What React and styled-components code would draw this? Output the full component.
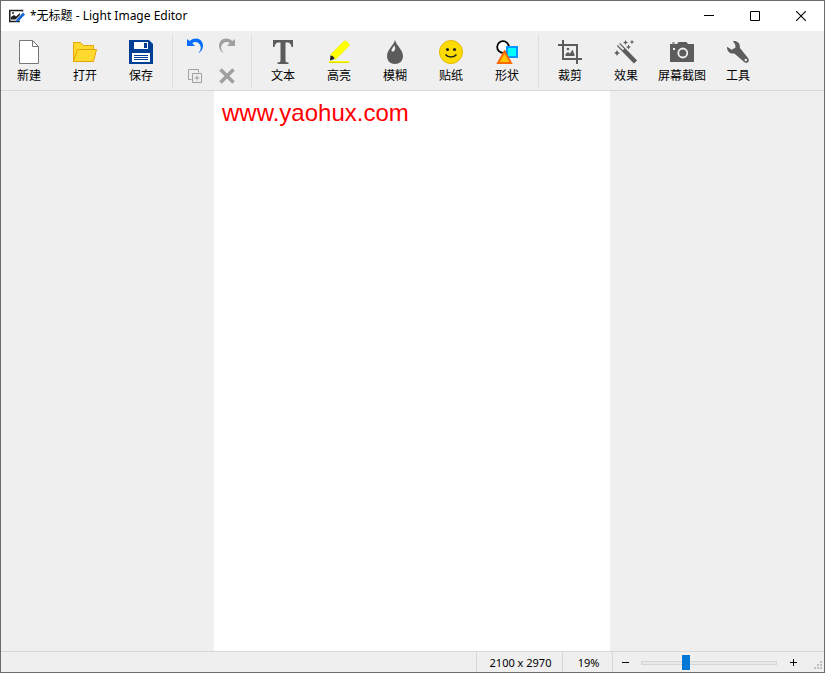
import React, { useState } from 'react';
import styled, { createGlobalStyle } from 'styled-components';

const GlobalStyle = createGlobalStyle`
  * { box-sizing: border-box; }
  body {
    margin: 0;
    font-family: "Noto Sans", "Noto Sans CJK SC", sans-serif;
    font-size: 12px;
    color: #000;
  }
  button {
    margin: 0;
    padding: 0;
    border: 0;
    background: transparent;
    color: inherit;
    font: inherit;
  }
  svg { display: block; flex: none; }
`;

const Window = styled.div`
  display: flex;
  flex-direction: column;
  height: 100vh;
  border: 1px solid #6b6b6b;
  background: #efefef;
`;

const TitleBar = styled.header`
  display: flex;
  align-items: center;
  flex: none;
  height: 30px;
  padding-left: 8px;
  background: #fff;
`;

const Title = styled.h1`
  flex: 1;
  margin: 0 0 0 5px;
  font-size: 12px;
  font-weight: 400;
  line-height: 16px;
`;

const WindowButton = styled.button`
  display: flex;
  align-items: center;
  justify-content: center;
  width: 46px;
  height: 30px;
  &:hover { background: #e5e5e5; }
`;

const Toolbar = styled.nav`
  display: flex;
  flex: none;
  height: 60px;
  border-bottom: 1px solid #d7d7d7;
`;

const ToolButton = styled.button`
  display: flex;
  flex-direction: column;
  align-items: center;
  gap: 4px;
  width: 56px;
  padding-top: 9px;
  line-height: 16px;
  white-space: nowrap;
  &:hover { background: #e3eef8; }
`;

const Separator = styled.div`
  width: 1px;
  margin: 3px 3px 2px;
  background: #dfdfdf;
`;

const SmallTools = styled.div`
  display: grid;
  grid-template-columns: 32px 32px;
  grid-template-rows: 28px 28px;
  row-gap: 2px;
  padding: 1px 5px 0 3px;
`;

const SmallButton = styled.button`
  display: flex;
  align-items: center;
  justify-content: center;
  color: ${(p) => (p.disabled ? '#a0a0a0' : '#0a6cff')};
`;

const Workspace = styled.main`
  display: flex;
  justify-content: center;
  flex: 1;
  min-height: 0;
  padding-right: 1px;
`;

const Page = styled.div`
  height: 100%;
  aspect-ratio: 2100 / 2970;
  padding: 8px;
  background: #fff;
`;

const PageText = styled.p`
  margin: 0;
  color: #f00;
  font-family: "Liberation Sans", Arial, sans-serif;
  font-size: 24px;
  line-height: 28px;
`;

const StatusBar = styled.footer`
  display: flex;
  justify-content: flex-end;
  flex: none;
  height: 21px;
  border-top: 1px solid #d7d7d7;
  font-size: 11px;
  line-height: 21px;
`;

const StatusCell = styled.div`
  width: ${(p) => p.$width};
  border-left: 1px solid #d7d7d7;
  padding-left: 2px;
  text-align: center;
`;

const ZoomBar = styled.div`
  display: flex;
  align-items: center;
  padding-top: 2px;
  border-left: 1px solid #d7d7d7;
`;

const ZoomButton = styled.button`
  display: flex;
  align-items: center;
  justify-content: center;
  width: 24px;
  height: 18px;
`;

const ZoomSlider = styled.input`
  appearance: none;
  width: 136px;
  height: 16px;
  margin: 0 4px;
  background: transparent;
  &::-webkit-slider-runnable-track {
    height: 4px;
    border: 1px solid #d6d6d6;
    background: #e7eaea;
  }
  &::-webkit-slider-thumb {
    appearance: none;
    width: 8px;
    height: 15px;
    margin-top: -7px;
    background: #0078d7;
  }
`;

const Grip = styled.div`
  display: flex;
  align-items: flex-end;
  width: 19px;
  padding: 0 1px 2px 9px;
`;

const Icon = ({ size = 24, children }) => (
  <svg width={size} height={size} viewBox={`0 0 ${size} ${size}`} fill="none" aria-hidden="true">
    {children}
  </svg>
);

const GRAY = '#5c5c5c';

const NewIcon = () => (
  <Icon>
    <path d="M2.5.5h13l6 6v17h-19z" fill="#fff" stroke="#777" />
    <path d="M15.5.5v6h6" stroke="#777" />
  </Icon>
);

const OpenIcon = () => (
  <Icon>
    <path d="M.5 21.500V2.500h7l3 3h10v5" fill="#ffd92e" stroke="#e5a50a" />
    <path d="M4.500 9.500h19l-3 12H.500z" fill="#ffd92e" stroke="#e5a50a" />
  </Icon>
);

const SaveIcon = () => (
  <Icon>
    <path d="M0 0h20l4 4v20H0z" fill="#003f96" />
    <path d="M5 2h14v7H5zM3 13h18v9H3z" fill="#fff" />
    <path d="M15 3h3v5h-3zM5 15h14v1H5zM5 17h14v1H5zM5 19h14v1H5z" fill="#003f96" />
  </Icon>
);

const curvedArrow = 'M0 1l2.500 2C4.500 1.300 7 .5 9 .5c4 0 7 3.200 7 7.300 0 3.500-2 6.200-5 7.200 1.800-1.500 2.800-3.200 2.800-5.200C13.800 6.500 11.300 4 8.300 4c-1.300 0-2.300.400-3 1.200L8 8H0z';

const UndoIcon = () => (
  <Icon size={16}><path d={curvedArrow} fill="currentColor" /></Icon>
);

const RedoIcon = () => (
  <Icon size={16}><path d={curvedArrow} fill="currentColor" transform="matrix(-1 0 0 1 16 0)" /></Icon>
);

const DuplicateIcon = () => (
  <Icon size={16}>
    <path d="M4.500 11.500h-3v-10h10v3M5.500 5.500h9v9h-9zM10 7.500v5M7.500 10h5" stroke="currentColor" />
  </Icon>
);

const DeleteIcon = () => (
  <Icon size={16}><path d="M1.500 1.500l13 13M14.500 1.500l-13 13" stroke="currentColor" strokeWidth="3.600" /></Icon>
);

const TextIcon = () => (
  <Icon>
    <path d="M2 0h20v7h-1.500c-.5-3-1.500-4.500-4-4.500H14.500V20c0 1.800.5 2.500 3 2.500V24h-11v-1.500c2.500 0 3-.7 3-2.500V2.500H7.500c-2.500 0-3.500 1.500-4 4.500H2z" fill={GRAY} />
  </Icon>
);

const HighlightIcon = () => (
  <Icon>
    <path d="M3.500 14.500L16.500 1.700c1-1 2.300-.9 3.300 0l1.700 1.600c.9 1 .9 2.200 0 3.200L8.500 19.500z" fill="#ff0" stroke="#e8e800" strokeWidth=".5" />
    <path d="M3.500 15.500c2 0 3.800 1.600 4 3.500L3 20.500z" fill="#222" />
    <path d="M2 21h20v2H2z" fill="#ff0" />
    <path d="M2 22.500h20" stroke="#dede00" />
  </Icon>
);

const BlurIcon = () => (
  <Icon>
    <path d="M12 0c1 5 8 9.500 8 16 0 5-3.500 8-8 8s-8-3-8-8C4 9.500 11 5 12 0z" fill={GRAY} />
    <path d="M11.500 5.500c1.500 3 .5 6.500-2.500 6-1.500-1 .5-4 2.500-6z" fill="#efefef" />
  </Icon>
);

const StickerIcon = () => (
  <Icon>
    <circle cx="12" cy="12" r="11.500" fill="#ffdc00" stroke="#e3b800" />
    <circle cx="8.500" cy="9.500" r="1.600" fill="#222" />
    <circle cx="15.500" cy="9.500" r="1.600" fill="#222" />
    <path d="M6.500 14.500c2.500 3.300 8.500 3.300 11 0" stroke="#222" strokeWidth="1.500" />
  </Icon>
);

const ShapesIcon = () => (
  <Icon>
    <circle cx="8" cy="7" r="5.800" fill="#fff" stroke="#000" strokeWidth="1.800" />
    <path d="M12 7h10v10H12z" fill="#0ff" stroke="#0a95ff" strokeWidth="2" />
    <path d="M9.500 11.500L16 23H3z" fill="#ffc800" stroke="#ff6a00" strokeWidth="2" />
  </Icon>
);

const CropIcon = () => (
  <Icon>
    <path d="M0 5h19v19M5 0v19h19" stroke={GRAY} strokeWidth="2" />
    <path d="M7.500 16v-2l2.500-2 2 1.500 2.500-4 2 5V16z" fill={GRAY} />
    <circle cx="10" cy="9" r="1.300" fill={GRAY} />
  </Icon>
);

const EffectIcon = () => (
  <Icon>
    <path d="M4.500 4.500l17 17.500" stroke={GRAY} strokeWidth="4.500" />
    <path d="M4.500 4.500l5 5" stroke="#efefef" strokeWidth="1.800" />
    <path d="M3 10l1 2 2 1-2 1-1 2-1-2-2-1 2-1zM11.500 0l.8 1.700 1.700.8-1.700.8-.8 1.700-.8-1.700L9 2.500l1.700-.8zM18 0l.7 1.300 1.300.7-1.300.7L18 4l-.7-1.300L16 2l1.300-.7zM14.500 4.500l.8 1.700 1.700.8-1.700.8-.8 1.700-.8-1.700L12 7l1.700-.8z" fill={GRAY} />
  </Icon>
);

const CameraIcon = () => (
  <Icon>
    <path d="M0 4h7l1.500-2h8L18 4h6v18H0zM2 2.500h3v1H2z" fill={GRAY} />
    <circle cx="12.800" cy="13" r="4.500" stroke="#efefef" strokeWidth="1.800" />
    <path d="M3 8h2v2H3z" fill="#efefef" />
  </Icon>
);

const WrenchIcon = () => (
  <Icon>
    <path d="M7 1.200c4-.8 7.500 2.300 6.800 6.500l8.400 10.600c2 2.800-1 5.700-3.700 3.900L8.300 13.500C4.500 14.200.7 11.300 1 6.700l4.800 3 3.700-2.200-.3-3z" fill={GRAY} />
    <circle cx="19.800" cy="20" r="1.200" fill="#efefef" />
  </Icon>
);

const LogoIcon = () => (
  <Icon size={16}>
    <path d="M13.500 3.500V2.500H.8v11h10" stroke="#1d1d1d" strokeWidth="1.500" />
    <path d="M2 11.500V9l3-2 2 1.500L11 5v2l-4.500 4.500z" fill="#1d1d1d" />
    <circle cx="4" cy="5" r="1" fill="#1d1d1d" />
    <path d="M8.500 12.500L15 5.500" stroke="#1264d4" strokeWidth="2.600" />
    <path d="M6.500 14l1-2.500L9.300 13z" fill="#1264d4" />
  </Icon>
);

const fileTools = [
  { label: '新建', icon: <NewIcon /> },
  { label: '打开', icon: <OpenIcon /> },
  { label: '保存', icon: <SaveIcon /> },
];

const drawTools = [
  { label: '文本', icon: <TextIcon /> },
  { label: '高亮', icon: <HighlightIcon /> },
  { label: '模糊', icon: <BlurIcon /> },
  { label: '贴纸', icon: <StickerIcon /> },
  { label: '形状', icon: <ShapesIcon /> },
];

const imageTools = [
  { label: '裁剪', icon: <CropIcon /> },
  { label: '效果', icon: <EffectIcon /> },
  { label: '屏幕截图', icon: <CameraIcon /> },
  { label: '工具', icon: <WrenchIcon /> },
];

const ToolGroup = ({ tools }) =>
  tools.map((tool) => (
    <ToolButton key={tool.label} type="button">
      {tool.icon}
      {tool.label}
    </ToolButton>
  ));

const App = () => {
  const [zoom, setZoom] = useState(32);

  return (
    <>
      <GlobalStyle />
      <Window>
        <TitleBar>
          <LogoIcon />
          <Title>*无标题 - Light Image Editor</Title>
          <WindowButton type="button" aria-label="Minimize">
            <Icon size={10}><path d="M0 4.500h10" stroke="#000" /></Icon>
          </WindowButton>
          <WindowButton type="button" aria-label="Maximize">
            <Icon size={10}><path d="M.5.5h9v9h-9z" stroke="#000" /></Icon>
          </WindowButton>
          <WindowButton type="button" aria-label="Close">
            <Icon size={10}><path d="M0 0l10 10M10 0L0 10" stroke="#000" strokeWidth="1.100" /></Icon>
          </WindowButton>
        </TitleBar>

        <Toolbar>
          <ToolGroup tools={fileTools} />
          <Separator />
          <SmallTools>
            <SmallButton type="button" aria-label="Undo"><UndoIcon /></SmallButton>
            <SmallButton type="button" aria-label="Redo" disabled><RedoIcon /></SmallButton>
            <SmallButton type="button" aria-label="Duplicate" disabled><DuplicateIcon /></SmallButton>
            <SmallButton type="button" aria-label="Delete" disabled><DeleteIcon /></SmallButton>
          </SmallTools>
          <Separator />
          <ToolGroup tools={drawTools} />
          <Separator />
          <ToolGroup tools={imageTools} />
        </Toolbar>

        <Workspace>
          <Page>
            <PageText>www.yaohux.com</PageText>
          </Page>
        </Workspace>

        <StatusBar>
          <StatusCell $width="86px">2100 x 2970</StatusCell>
          <StatusCell $width="50px">19%</StatusCell>
          <ZoomBar>
            <ZoomButton type="button" aria-label="Zoom out" onClick={() => setZoom(Math.max(0, zoom - 5))}>
              <Icon size={8}><path d="M1 3.500h7" stroke="#000" /></Icon>
            </ZoomButton>
            <ZoomSlider
              type="range"
              min="0"
              max="100"
              aria-label="Zoom"
              value={zoom}
              onChange={(e) => setZoom(Number(e.target.value))}
            />
            <ZoomButton type="button" aria-label="Zoom in" onClick={() => setZoom(Math.min(100, zoom + 5))}>
              <Icon size={8}><path d="M1 3.500h7M4.500 0v7" stroke="#000" /></Icon>
            </ZoomButton>
          </ZoomBar>
          <Grip>
            <Icon size={9}>
              <path d="M6 0h2v2H6zM3 3h2v2H3zM6 3h2v2H6zM0 6h2v2H0zM3 6h2v2H3zM6 6h2v2H6z" fill="#bfbfbf" />
            </Icon>
          </Grip>
        </StatusBar>
      </Window>
    </>
  );
};

export default App;
